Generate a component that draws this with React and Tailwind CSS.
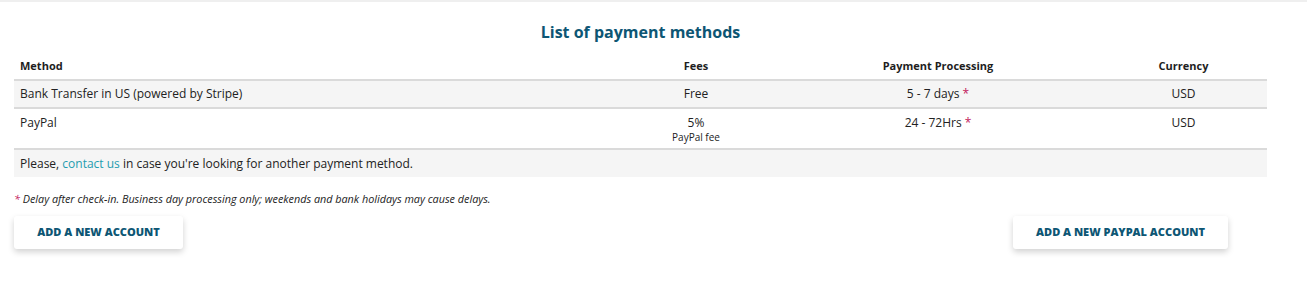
import React from 'react';

const rows = [
  { method: 'Bank Transfer in US (powered by Stripe)', fee: 'Free', processing: '5 - 7 days', currency: 'USD', shaded: true },
  { method: 'PayPal', fee: '5%', feeNote: 'PayPal fee', processing: '24 - 72Hrs', currency: 'USD' },
];

const cols = 'grid grid-cols-[602px_160px_324px_167px]';

const App = () => {
  return (
    <div className="w-[1307px] h-[286px] bg-white font-['Open_Sans',sans-serif] text-[#222] border-t-2 border-[#efefef]">
      <div className="w-[1253px] ml-[14px]">
        <h2 className="text-center text-[16px] font-bold text-[#0d5674] pt-[20px] leading-[20px]">
          List of payment methods
        </h2>

        {/* payment methods table */}
        <div className="mt-[11px] text-[12px]">
          <div className={`${cols} h-[28px] items-center text-[11px] font-bold text-[#1e1e1e] border-b-2 border-[#dadada]`}>
            <div className="pl-[6px]">Method</div>
            <div className="text-center">Fees</div>
            <div className="text-center">Payment Processing</div>
            <div className="text-center">Currency</div>
          </div>

          {rows.map((row) => (
            <div
              key={row.method}
              className={`${cols} border-b-2 border-[#dadada] ${row.shaded ? 'bg-[#f5f5f5] h-[28px] items-center' : 'bg-white h-[41px] items-start pt-[6px]'}`}
            >
              <div className="pl-[6px] leading-[16px]">{row.method}</div>
              <div className="text-center leading-[16px]">
                <div>{row.fee}</div>
                {row.feeNote && <div className="text-[10px] leading-[12px]">{row.feeNote}</div>}
              </div>
              <div className="text-center leading-[16px]">
                {row.processing} <span className="text-[#c2185b]">*</span>
              </div>
              <div className="text-center leading-[16px]">{row.currency}</div>
            </div>
          ))}

          <div className="bg-[#f5f5f5] h-[27px] flex items-center pl-[6px]">
            <span>
              Please, <a className="text-[#1f9db0]">contact us</a> in case you're looking for another payment method.
            </span>
          </div>
        </div>

        <p className="mt-[15px] text-[10.8px] italic text-[#222] leading-[14px]">
          <span className="text-[#c2185b]">*</span> Delay after check-in. Business day processing only; weekends and bank holidays may cause delays.
        </p>

        <div className="flex justify-between mt-[10px] pr-[39px]">
          <button className="w-[169px] h-[33px] bg-white rounded-[3px] shadow-[0_3px_6px_rgba(0,0,0,0.18)] text-[11px] font-extrabold text-[#0d5674] uppercase">
            Add a new account
          </button>
          <button className="w-[215px] h-[33px] bg-white rounded-[3px] shadow-[0_3px_6px_rgba(0,0,0,0.18)] text-[11px] font-extrabold text-[#0d5674] uppercase">
            Add a new PayPal account
          </button>
        </div>
      </div>
    </div>
  );
};

export default App;
